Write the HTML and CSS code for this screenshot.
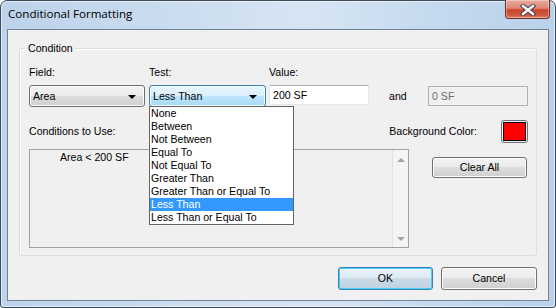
FILE: index.html
```html
<!DOCTYPE html>
<html>
<head>
<meta charset="utf-8">
<link rel="stylesheet" href="styles.css">
</head>
<body>
<div class="window">
  <div class="titlebar">
    <span class="title">Conditional Formatting</span>
    <div class="close">
      <svg width="18" height="12" viewBox="0 0 18 12">
        <path d="M4 2 L14 10 M14 2 L4 10" stroke="#3b3f4f" stroke-width="4.4" stroke-linecap="square" fill="none"/>
        <path d="M4 2 L14 10 M14 2 L4 10" stroke="#ffffff" stroke-width="2.4" stroke-linecap="square" fill="none"/>
      </svg>
    </div>
  </div>
  <div class="client">
    <div class="group">
      <span class="legend">Condition</span>
      <div class="row labels">
        <span class="lbl col1">Field:</span>
        <span class="lbl col2">Test:</span>
        <span class="lbl">Value:</span>
      </div>
      <div class="row inputs">
        <div class="combo gray"><span>Area</span><i class="arrow"></i></div>
        <div class="combo blue"><span>Less Than</span><i class="arrow"></i></div>
        <div class="textbox">200 SF</div>
        <span class="and">and</span>
        <div class="textbox disabled">0 SF</div>
      </div>
      <div class="row mid">
        <span class="lbl">Conditions to Use:</span>
        <div class="bgcolor">
          <span class="lbl">Background Color:</span>
          <div class="swatch"><div class="swatch-in"></div></div>
        </div>
      </div>
      <div class="row lower">
        <div class="listbox">
          <div class="listtext">Area &lt; 200 SF</div>
          <div class="scrollbar">
            <i class="sarrow up"></i>
            <i class="sarrow down"></i>
          </div>
        </div>
        <div class="btn clear">Clear All</div>
      </div>
      <ul class="dropdown">
        <li>None</li>
        <li>Between</li>
        <li>Not Between</li>
        <li>Equal To</li>
        <li>Not Equal To</li>
        <li>Greater Than</li>
        <li>Greater Than or Equal To</li>
        <li class="sel">Less Than</li>
        <li>Less Than or Equal To</li>
      </ul>
    </div>
    <div class="buttons">
      <div class="btn default">OK</div>
      <div class="btn">Cancel</div>
    </div>
  </div>
</div>
</body>
</html>
```
FILE: styles.css
```css
html, body {
  margin: 0;
  padding: 0;
  background: #ffffff;
}
body {
  font-family: "Liberation Sans", Arial, sans-serif;
  font-size: 10.6px;
  color: #000;
}
.window {
  box-sizing: border-box;
  width: 556px;
  height: 308px;
  border: 1px solid #3f4b58;
  border-radius: 7px 7px 3px 3px;
  background: linear-gradient(90deg, #bcd3eb 0%, #cadcef 30%, #d6e5f4 55%, #c4d9ee 80%, #b9d1ea 100%);
  display: flex;
  flex-direction: column;
  padding: 0 6px 6px 6px;
  box-shadow: inset 0 0 0 1px rgba(255,255,255,0.55);
}
.titlebar {
  height: 28px;
  display: flex;
  align-items: flex-start;
  margin: 0 -6px;
}
.title {
  font-family: "Open Sans", "Noto Sans", sans-serif;
  font-size: 11.6px;
  line-height: 14px;
  margin-top: 6px;
  padding-left: 7px;
  color: #000;
}
.close {
  margin-left: auto;
  margin-right: 5px;
  margin-top: -1px;
  width: 45px;
  height: 19px;
  box-sizing: border-box;
  border: 1px solid #6e2c24;
  border-top: none;
  border-radius: 0 0 4px 4px;
  background: linear-gradient(#e9a99a 0%, #dd8a78 45%, #c9452f 55%, #d0583f 85%, #e08a6a 100%);
  display: flex;
  align-items: center;
  justify-content: center;
  box-shadow: inset 0 0 0 1px rgba(255,255,255,0.35);
}
.close svg {
  display: block;
  margin-top: 1px;
}
.client {
  flex: 1;
  border: 1px solid #6f8296;
  background: #f0f0f0;
  display: flex;
  flex-direction: column;
}
.group {
  position: relative;
  margin: 18px 11px 0 11px;
  height: 208px;
  box-sizing: border-box;
  border: 1px solid #d5dfe5;
  border-radius: 3px;
  box-shadow: inset 1px 1px 0 #ffffff;
  padding: 17px 8px 0 9px;
}
.legend {
  position: absolute;
  left: 6px;
  top: -7px;
  padding: 0 2px;
  background: #f0f0f0;
  line-height: 13px;
}
.row {
  display: flex;
}
.lbl {
  line-height: 13px;
  white-space: nowrap;
}
.labels .col1, .labels .col2 {
  width: 120px;
}
.inputs {
  margin-top: 6px;
  align-items: flex-start;
}
.combo {
  box-sizing: border-box;
  height: 22px;
  border-radius: 3px;
  display: flex;
  align-items: center;
  padding: 0 8px 0 3px;
  line-height: 13px;
}
.combo.gray {
  width: 116px;
  margin-right: 4px;
  border: 1px solid #707070;
  background: linear-gradient(#f2f2f2 0%, #ebebeb 50%, #dddddd 50%, #cfcfcf 100%);
  box-shadow: inset 0 0 0 1px #fbfbfb;
}
.combo.blue {
  width: 117px;
  margin-right: 3px;
  border: 1px solid #3c7fb1;
  background: linear-gradient(#e9f5fc 0%, #d8effc 50%, #bde6fd 50%, #a6d9f4 100%);
  box-shadow: inset 0 0 0 1px #f3fbfe;
}
.arrow {
  margin-left: auto;
  width: 0;
  height: 0;
  border-left: 4px solid transparent;
  border-right: 4px solid transparent;
  border-top: 4px solid #000;
  margin-top: 1px;
}
.textbox {
  box-sizing: border-box;
  width: 100px;
  height: 20px;
  background: #fff;
  border: 1px solid #e3e9ef;
  border-top-color: #abadb3;
  padding: 0 3px;
  line-height: 18px;
}
.textbox.disabled {
  width: 100px;
  height: 20px;
  margin-top: 1px;
  background: #f0f0f0;
  border: 1px solid #adb2b5;
  color: #6d6d6d;
}
.and {
  line-height: 13px;
  margin: 5px 0 0 20px;
  width: 39px;
}
.mid {
  margin-top: 13px;
  height: 23px;
  align-items: center;
}
.bgcolor {
  margin-left: auto;
  display: flex;
  align-items: center;
}
.swatch {
  margin-left: 24px;
  width: 27px;
  height: 23px;
  box-sizing: border-box;
  border: 1px solid #707070;
  border-radius: 3px;
  padding: 1px;
  background: #f4f4f4;
}
.swatch-in {
  height: 100%;
  box-sizing: border-box;
  border: 1px solid #000;
  background: #ff0000;
}
.lower {
  margin-top: 6px;
  align-items: flex-start;
}
.listbox {
  box-sizing: border-box;
  width: 380px;
  height: 99px;
  border: 1px solid #a0a0a0;
  background: #f0f0f0;
  display: flex;
}
.listtext {
  flex: 1;
  padding: 1px 0 0 30px;
  line-height: 13px;
}
.scrollbar {
  width: 16px;
  box-sizing: border-box;
  border-left: 1px solid #e2e2e2;
  background: #f4f4f4;
  display: flex;
  flex-direction: column;
  justify-content: space-between;
  align-items: center;
  padding: 8px 0 6px;
}
.sarrow {
  width: 0;
  height: 0;
  border-left: 4px solid transparent;
  border-right: 4px solid transparent;
}
.sarrow.up {
  border-bottom: 4px solid #a3a3a3;
}
.sarrow.down {
  border-top: 4px solid #a3a3a3;
}
.btn {
  box-sizing: border-box;
  height: 23px;
  width: 95px;
  border: 1px solid #707070;
  border-radius: 3px;
  background: linear-gradient(#f2f2f2 0%, #ebebeb 50%, #dddddd 50%, #cfcfcf 100%);
  box-shadow: inset 0 0 0 1px #fcfcfc;
  display: flex;
  align-items: center;
  justify-content: center;
  line-height: 13px;
}
.btn.clear {
  margin-left: 23px;
  margin-top: 8px;
  height: 21px;
}
.buttons {
  display: flex;
  justify-content: flex-end;
  gap: 8px;
  margin: 11px 11px 0 0;
}
.buttons .btn + .btn {
  width: 96px;
}
.btn.default {
  border-color: #3c7fb1;
  background: linear-gradient(#eaf5fb 0%, #dde9f2 50%, #cbdbe8 50%, #bfd1e0 100%);
  box-shadow: inset 0 0 0 1px #49d0f6;
}
.dropdown {
  position: absolute;
  left: 129px;
  top: 57px;
  width: 145px;
  margin: 0;
  padding: 0;
  list-style: none;
  box-sizing: border-box;
  border: 1px solid #646464;
  background: #fff;
}
.dropdown li {
  height: 13px;
  line-height: 13px;
  padding-left: 1px;
  white-space: nowrap;
}
.dropdown li.sel {
  background: #3399ff;
  color: #fff;
}
```
